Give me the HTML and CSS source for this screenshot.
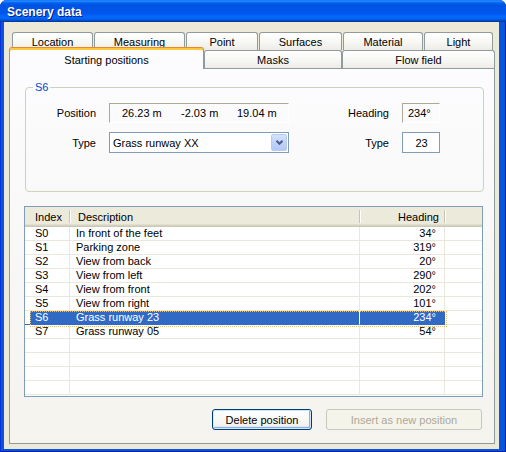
FILE: index.html
```html
<!DOCTYPE html>
<html>
<head>
<meta charset="utf-8">
<link rel="stylesheet" href="styles.css">
</head>
<body>
<div class="window">
  <div class="titlebar"><span class="title">Scenery data</span></div>
  <div class="client">
    <div class="tabrow back">
      <div class="tab w-loc">Location</div>
      <div class="tab w-mea">Measuring</div>
      <div class="tab w-pt">Point</div>
      <div class="tab w-sur">Surfaces</div>
      <div class="tab w-mat">Material</div>
      <div class="tab w-lig">Light</div>
    </div>
    <div class="tabrow front">
      <div class="tab sel w-sp">Starting positions</div>
      <div class="tab w-mas">Masks</div>
      <div class="tab w-flo">Flow field</div>
    </div>
    <div class="page">
      <div class="group">
        <span class="caption">S6</span>
        <div class="fields">
          <span class="lbl">Position</span>
          <div class="static pos"><span>26.23 m</span><span>-2.03 m</span><span>19.04 m</span></div>
          <span class="lbl">Heading</span>
          <div class="static heading">234°</div>
          <span class="lbl">Type</span>
          <div class="combo">
            <span class="combo-text">Grass runway XX</span>
            <span class="combo-btn"><svg width="7" height="5" viewBox="0 0 7 5"><polyline points="0.5,0.8 3.5,3.8 6.5,0.8" fill="none" stroke="#4D6185" stroke-width="2"/></svg></span>
          </div>
          <span class="lbl">Type</span>
          <div class="edit">23</div>
        </div>
      </div>
      <div class="list">
        <div class="lhead">
          <div class="hc">Index</div>
          <div class="hc hdesc">Description</div>
          <div class="hc hhead">Heading</div>
          <div class="hc last"></div>
        </div>
        <div class="row"><div class="c ci">S0</div><div class="c cd">In front of the feet</div><div class="c ch">34°</div><div class="c cx"></div></div>
        <div class="row"><div class="c ci">S1</div><div class="c cd">Parking zone</div><div class="c ch">319°</div><div class="c cx"></div></div>
        <div class="row"><div class="c ci">S2</div><div class="c cd">View from back</div><div class="c ch">20°</div><div class="c cx"></div></div>
        <div class="row"><div class="c ci">S3</div><div class="c cd">View from left</div><div class="c ch">290°</div><div class="c cx"></div></div>
        <div class="row"><div class="c ci">S4</div><div class="c cd">View from front</div><div class="c ch">202°</div><div class="c cx"></div></div>
        <div class="row"><div class="c ci">S5</div><div class="c cd">View from right</div><div class="c ch">101°</div><div class="c cx"></div></div>
        <div class="row sel"><div class="c ci">S6</div><div class="c cd">Grass runway 23</div><div class="c ch">234°</div><div class="c cx"></div></div>
        <div class="row"><div class="c ci">S7</div><div class="c cd">Grass runway 05</div><div class="c ch">54°</div><div class="c cx"></div></div>
        <div class="row"><div class="c ci"></div><div class="c cd"></div><div class="c ch"></div><div class="c cx"></div></div>
        <div class="row"><div class="c ci"></div><div class="c cd"></div><div class="c ch"></div><div class="c cx"></div></div>
        <div class="row"><div class="c ci"></div><div class="c cd"></div><div class="c ch"></div><div class="c cx"></div></div>
        <div class="row"><div class="c ci"></div><div class="c cd"></div><div class="c ch"></div><div class="c cx"></div></div>
      </div>
      <div class="buttons">
        <button class="btn default w-del">Delete position</button>
        <button class="btn disabled w-ins">Insert as new position</button>
      </div>
    </div>
  </div>
</div>
</body>
</html>
```
FILE: styles.css
```css
* { box-sizing: border-box; }
body {
  margin: 0;
  background: #ffffff;
  font-family: "Liberation Sans", Arial, sans-serif;
  font-size: 11px;
  color: #000;
}
.window {
  width: 506px;
  height: 452px;
  display: flex;
  flex-direction: column;
  background: #0855DD;
  border-radius: 7px 7px 0 0;
  box-shadow: inset 1px 0 #0831D9, inset -1px 0 #001EA0, inset 0 -1px #001EA0;
}
.titlebar {
  flex: none;
  height: 22px;
  display: flex;
  align-items: center;
  padding-left: 7px;
  border-radius: 7px 7px 0 0;
  background: linear-gradient(#0058EE 0%, #3593FF 4%, #288EFF 6%, #127DFF 8%, #036FFC 10%, #0262EE 14%, #0057E5 20%, #0054E3 24%, #0055EB 56%, #005BF5 66%, #026AFE 76%, #0062EF 86%, #0052D6 92%, #0040AB 96%, #003092 100%);
}
.title {
  color: #fff;
  font-weight: bold;
  font-size: 12px;
  text-shadow: 1px 1px #0A1883;
  padding-top: 1px;
}
.client {
  flex: 1;
  margin: 0 7px 3px 4px;
  background: #ECE9D8;
  padding: 10px 4px 5px 5px;
  display: flex;
  flex-direction: column;
}
.tabrow {
  display: flex;
  height: 18px;
  flex: none;
}
.tabrow.back { padding-left: 3px; gap: 1px; }
.tab {
  height: 18px;
  border: 1px solid #919B9C;
  border-bottom: none;
  border-radius: 3px 3px 0 0;
  background: linear-gradient(#FFFFFF, #F6F6F3 60%, #ECEBE5);
  display: flex;
  align-items: center;
  justify-content: center;
  padding-top: 1px;
  white-space: nowrap;
}
.tab.sel {
  position: relative;
  z-index: 2;
  margin-top: -3px;
  height: 22px;
  border-top: 1px solid #E68B2C;
  box-shadow: inset 0 2px #FFC73C;
  background: #FCFCFE;
  padding-top: 2px;
  align-items: center;
}
.w-loc { width: 81px; }
.w-mea { width: 91px; }
.w-pt { width: 72px; }
.w-sur { width: 83px; }
.w-mat { width: 80px; }
.w-lig { width: 69px; }
.w-sp { width: 195px; }
.w-mas { width: 138px; }
.w-flo { width: 153px; }
.page {
  height: 376px;
  flex: none;
  border: 1px solid #919B9C;
  background: linear-gradient(#FCFCFE, #F4F3EE);
  display: flex;
  flex-direction: column;
}
.group {
  position: relative;
  margin: 18px 0 0 15px;
  width: 459px;
  height: 105px;
  flex: none;
  border: 1px solid #D0D0BF;
  border-radius: 4px;
  padding-top: 15px;
}
.caption {
  position: absolute;
  top: -7px;
  left: 7px;
  padding: 0 2px;
  line-height: 13px;
  background: #FCFCFD;
  color: #0046D5;
}
.fields {
  display: grid;
  grid-template-columns: 70px 180px 87px 38px;
  grid-template-rows: 20px 21px;
  column-gap: 13px;
  row-gap: 9px;
  align-items: center;
}
.lbl { text-align: right; }
.static {
  height: 20px;
  border-top: 1px solid #ACA899;
  border-left: 1px solid #ACA899;
  border-right: 1px solid #FFFFFF;
  border-bottom: 1px solid #FFFFFF;
  display: flex;
  align-items: center;
}
.pos {
  display: grid;
  grid-template-columns: 59px 56px auto;
  padding-left: 12px;
  align-items: center;
}
.heading { padding-left: 5px; }
.combo {
  height: 21px;
  border: 1px solid #7F9DB9;
  background: #fff;
  display: flex;
  align-items: center;
  padding: 1px;
}
.combo-text { flex: 1; padding-left: 2px; }
.combo-btn {
  width: 16px;
  align-self: stretch;
  border: 1px solid #BAC9F0;
  border-radius: 2px;
  background: linear-gradient(#D6E2FC, #C1D3FB 50%, #B4C8F6);
  display: flex;
  align-items: center;
  justify-content: center;
}
.edit {
  height: 21px;
  border: 1px solid #7F9DB9;
  background: #fff;
  display: flex;
  align-items: center;
  justify-content: center;
  padding-left: 1px;
}
.list {
  margin: 14px 0 0 14px;
  width: 459px;
  height: 191px;
  flex: none;
  border: 1px solid #7F9DB9;
  background: #fff;
  overflow: hidden;
}
.lhead, .row {
  display: grid;
  grid-template-columns: 45px 290px 85px 1fr;
}
.lhead {
  height: 20px;
  background: #EBEADB;
  box-shadow: inset 0 -1px #CBC7B8, inset 0 -2px #D6D2C2, inset 0 -3px #E2DECD;
}
.hc {
  position: relative;
  display: flex;
  align-items: center;
  padding-left: 10px;
  padding-bottom: 1px;
}
.hc::after {
  content: "";
  position: absolute;
  right: 0;
  top: 3px;
  width: 1px;
  height: 13px;
  background: #C7C5B2;
  box-shadow: 1px 0 #FFFFFF;
}
.hc.hdesc { padding-left: 8px; }
.hc.hhead { justify-content: flex-end; padding: 0 6px 1px 0; }
.hc.last::after { display: none; }
.row { height: 14px; line-height: 13px; }
.c {
  border-bottom: 1px solid #EAE8DC;
  border-right: 1px solid #EAE8DC;
  white-space: nowrap;
  overflow: hidden;
}
.ci { padding-left: 10px; }
.cd { padding-left: 6px; }
.ch { text-align: right; padding-right: 8px; }
.cx { border-right: none; }
.row.sel { position: relative; }
.row.sel .ci { background: linear-gradient(to right, transparent 5px, #316AC5 5px); color: #fff; border-right-color: #316AC5; }
.row.sel .cd { background: #316AC5; color: #fff; border-right-color: #FFFFFF; }
.row.sel .ch { background: #316AC5; color: #fff; border-right-color: #316AC5; }
.row.sel .ci, .row.sel .cd, .row.sel .ch { border-bottom-color: #316AC5; }
.row.sel::after {
  content: "";
  position: absolute;
  left: 5px;
  top: 0;
  width: 415px;
  height: 14px;
  border: 1px dotted #E9C06A;
}
.buttons {
  display: flex;
  justify-content: flex-end;
  gap: 14px;
  margin-top: 12px;
  padding-right: 12px;
}
.btn {
  height: 21px;
  margin: 0;
  padding: 0;
  font-family: inherit;
  font-size: 11px;
  color: #000;
  border: 1px solid #003C74;
  border-radius: 3px;
  background: linear-gradient(#FFFFFF, #F3F3EF 80%, #D8D4CA);
  display: flex;
  align-items: center;
  justify-content: center;
}
.btn.default {
  box-shadow: inset 0 0 0 1px #CEE7FF, inset -1px -1px 0 1px #89ADE4;
}
.btn.disabled {
  border-color: #C9C7BA;
  background: #F5F4EA;
  color: #ACA899;
}
.w-del { width: 100px; }
.w-ins { width: 156px; }
```
